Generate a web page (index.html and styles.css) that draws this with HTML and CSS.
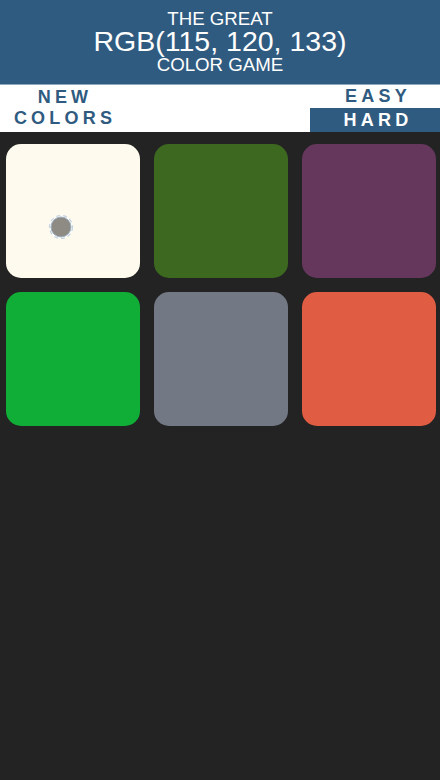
FILE: index.html
```html
<!DOCTYPE html>
<html>
<head>
<meta charset="utf-8">
<link rel="stylesheet" href="styles.css">
</head>
<body>
<header class="title">
  <div class="line small">THE GREAT</div>
  <div class="line big">RGB(115, 120, 133)</div>
  <div class="line small last">COLOR GAME</div>
</header>
<nav class="nav">
  <button class="btn new">NEW<br>COLORS</button>
  <div class="modes">
    <button class="btn mode">EASY</button>
    <button class="btn mode selected">HARD</button>
  </div>
</nav>
<main class="board">
  <div class="square" style="background:#fefbee"></div>
  <div class="square" style="background:#3d6820"></div>
  <div class="square" style="background:#65375c"></div>
  <div class="square" style="background:#10ae37"></div>
  <div class="square" style="background:#737885"></div>
  <div class="square" style="background:#e05c42"></div>
  <svg class="touch" width="26" height="26" viewBox="0 0 26 26">
    <circle cx="13" cy="13" r="11.5" fill="#ffffff" stroke="#c4d2de" stroke-width="1.2" stroke-dasharray="4 3"/>
    <circle cx="13" cy="13" r="10" fill="#8e8a84" stroke="#9fb0c0" stroke-width="1"/>
  </svg>
</main>
</body>
</html>
```
FILE: styles.css
```css
html, body {
  margin: 0;
  padding: 0;
  background: #232323;
  font-family: "Liberation Sans", Arial, sans-serif;
}
.title {
  background: #305b80;
  color: #ffffff;
  text-align: center;
  padding: 7px 0 0;
  height: 77px;
  border-bottom: 1px solid #8ea7bd;
}
.line {
  font-weight: normal;
}
.small {
  font-size: 18.7px;
  line-height: 24px;
}
.big {
  font-size: 28.5px;
  line-height: 20px;
}
.last {
  line-height: 28px;
}
.nav {
  background: #ffffff;
  height: 47px;
  display: flex;
  justify-content: space-between;
}
.btn {
  border: none;
  background: transparent;
  color: #305b80;
  font-family: "Liberation Sans", Arial, sans-serif;
  font-weight: bold;
  font-size: 18px;
  letter-spacing: 4.2px;
  padding: 0;
  margin: 0;
  cursor: pointer;
}
.new {
  width: 130px;
  line-height: 21px;
  padding-top: 2px;
  text-align: center;
  display: flex;
  flex-direction: column;
  align-items: center;
}
.modes {
  width: 130px;
  display: flex;
  flex-direction: column;
}
.mode {
  height: 23px;
  line-height: 23px;
  text-align: center;
  padding-left: 6px;
}
.mode.selected {
  height: 24px;
  line-height: 24px;
  background: #305b80;
  color: #ffffff;
}
.board {
  position: relative;
  display: grid;
  grid-template-columns: repeat(3, 134px);
  grid-auto-rows: 134px;
  gap: 14px;
  padding: 12px 4px 0 6px;
}
.square {
  border-radius: 15px;
}
.touch {
  position: absolute;
  left: 48px;
  top: 82px;
}
```
